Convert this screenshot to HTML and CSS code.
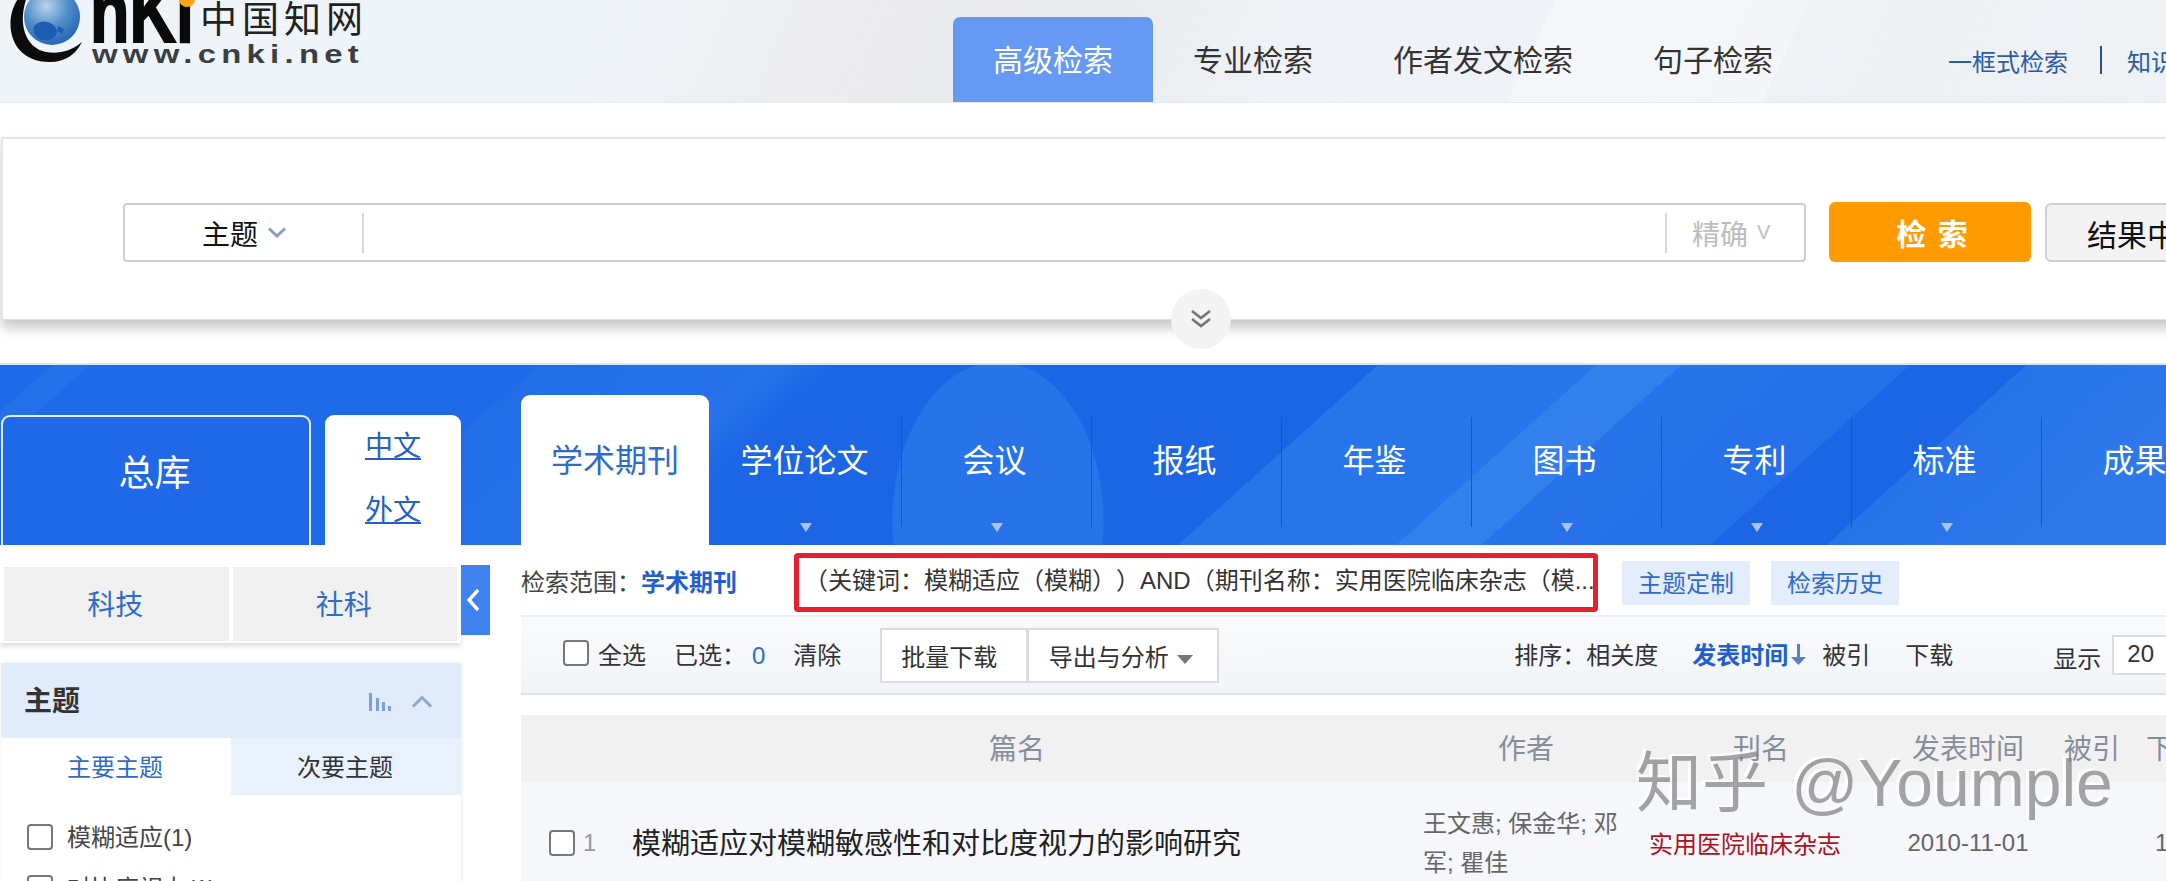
FILE: index.html
```html
<!DOCTYPE html>
<html lang="zh-CN">
<head>
<meta charset="utf-8">
<title>中国知网 高级检索</title>
<link rel="stylesheet" href="styles.css">
</head>
<body>
<header class="topbar">
  <div class="logo">
    <svg class="logo-svg" width="370" height="70" viewBox="0 0 370 70">
      <defs>
        <radialGradient id="globe" cx="0.4" cy="0.3" r="0.8">
          <stop offset="0" stop-color="#b9d5e6"/>
          <stop offset="0.5" stop-color="#4f8ccb"/>
          <stop offset="1" stop-color="#1a5cb0"/>
        </radialGradient>
      </defs>
      <path d="M22 -6 C2 14 6 62 50 62 C66 62 76 54 82 42 C70 52 58 54 46 52 C26 48 16 24 28 -6 Z" fill="#0b0b0b"/>
      <circle cx="52" cy="17" r="28" fill="url(#globe)"/>
      <path d="M34 26 C42 18 52 22 56 28 C60 36 50 42 42 40 C36 38 32 32 34 26 Z M58 26 l6 3 -2 5 -5 -3 Z" fill="#1f5db4"/>
      <text class="logo-nki" x="90" y="42" textLength="104" lengthAdjust="spacingAndGlyphs">nKi</text>
      <circle cx="187" cy="-1" r="8" fill="#ffa514"/>
      <text class="logo-cn" x="200" y="33" textLength="163">中国知网</text>
      <text class="logo-url" x="92" y="63" textLength="272" lengthAdjust="spacingAndGlyphs">www.cnki.net</text>
    </svg>
  </div>
  <nav class="modes">
    <a class="mode mode-on">高级检索</a>
    <a class="mode">专业检索</a>
    <a class="mode">作者发文检索</a>
    <a class="mode">句子检索</a>
  </nav>
  <div class="quick">
    <a class="quick-link">一框式检索</a>
    <span class="quick-sep"></span>
    <a class="quick-link">知识元检索</a>
  </div>
</header>

<section class="search-wrap">
  <div class="search-panel">
    <div class="search-box">
      <div class="field-select">
        <span>主题</span>
        <svg class="field-chev" width="20" height="11" viewBox="0 0 20 11"><path d="M2 1.500 L10 9 L18 1.500" fill="none" stroke="#8b9cc9" stroke-width="3"/></svg>
      </div>
      <div class="search-input"></div>
      <div class="precise"><span>精确</span><span class="precise-v">V</span></div>
    </div>
    <button class="btn-search">检 索</button>
    <button class="btn-within">结果中检索</button>
    <div class="expand">
      <svg width="22" height="18" viewBox="0 0 22 18"><path d="M2 1 L11 8 L20 1 M2 9 L11 16 L20 9" fill="none" stroke="#777" stroke-width="2.600"/></svg>
    </div>
  </div>
</section>

<section class="band">
  <a class="lib-all">总库</a>
  <div class="lib-lang"><a>中文</a><a>外文</a></div>
  <a class="db-on">学术期刊</a>
  <a class="db db-first db-more">学位论文</a>
  <a class="db db-more">会议</a>
  <a class="db">报纸</a>
  <a class="db">年鉴</a>
  <a class="db db-more">图书</a>
  <a class="db db-more">专利</a>
  <a class="db db-more">标准</a>
  <a class="db">成果</a>
</section>

<div class="content">
  <aside class="sidebar">
    <div class="cat-tabs">
      <a class="cat">科技</a>
      <a class="cat">社科</a>
    </div>
    <div class="facet">
      <div class="facet-head">
        <strong>主题</strong>
        <svg class="facet-chart" width="23" height="18" viewBox="0 0 23 18"><path d="M1 0h3v18H1z M8 5h3v13H8z M14 9h3v9h-3z M20 13h3v5h-3z" fill="#7d9fd6"/></svg>
        <svg class="facet-chev" width="22" height="13" viewBox="0 0 22 13"><path d="M2 11.500 L11 2.500 L20 11.500" fill="none" stroke="#8aa6d4" stroke-width="3"/></svg>
      </div>
      <div class="facet-tabs">
        <a class="facet-tab facet-tab-on">主要主题</a>
        <a class="facet-tab">次要主题</a>
      </div>
      <ul class="facet-list">
        <li><span class="check"></span><span class="facet-text">模糊适应(1)</span></li>
        <li><span class="check"></span><span class="facet-text">对比度视力(1)</span></li>
      </ul>
    </div>
  </aside>
  <button class="collapse" aria-label="收起">
    <svg width="15" height="24" viewBox="0 0 15 24"><path d="M12 2 L3 12 L12 22" fill="none" stroke="#fff" stroke-width="3.400"/></svg>
  </button>
  <main class="main">
    <div class="scope">
      <span class="scope-label">检索范围：</span><b class="scope-label scope-db">学术期刊</b>
      <div class="query">（关键词：模糊适应（模糊））AND（期刊名称：实用医院临床杂志（模...</div>
      <a class="chip chip-first">主题定制</a>
      <a class="chip">检索历史</a>
    </div>
    <div class="toolbar">
      <span class="check check-all"></span>
      <span>全选</span>
      <span class="selected">已选：<em>0</em></span>
      <span class="clear">清除</span>
      <button class="tool-btn tool-batch">批量下载</button>
      <button class="tool-btn tool-export">导出与分析<i class="caret"></i></button>
      <span class="sort-label">排序：相关度</span>
      <b class="sort-on">发表时间</b>
      <svg class="sort-arrow" width="15" height="24" viewBox="0 0 15 24"><path d="M6 2h3v13h6L7.500 23 0 15h6z" fill="#5b7fc0"/></svg>
      <span class="sort-cite">被引</span>
      <span class="sort-dl">下载</span>
      <span class="show">显示</span>
      <span class="page-size">20</span>
    </div>
    <div class="grid grid-head">
      <span></span>
      <span class="c">篇名</span>
      <span class="c">作者</span>
      <span class="c">刊名</span>
      <span class="c">发表时间</span>
      <span class="c">被引</span>
      <span class="dl-head">下载</span>
    </div>
    <div class="grid grid-row">
      <span class="row-no"><span class="check"></span><span class="no">1</span></span>
      <a class="row-title">模糊适应对模糊敏感性和对比度视力的影响研究</a>
      <span class="row-authors">王文惠; 保金华; 邓军; 瞿佳</span>
      <a class="row-journal">实用医院临床杂志</a>
      <span class="row-date">2010-11-01</span>
      <span></span>
      <span class="row-dl">1</span>
    </div>
  </main>
</div>
<div class="watermark">知乎 @Youmple</div>
</body>
</html>
```

FILE: styles.css
```css
* { box-sizing: border-box; }
html, body { margin: 0; padding: 0; }
body {
  position: relative;
  width: 2166px;
  height: 881px;
  overflow: hidden;
  background: #fff;
  color: #333;
  font-family: "Liberation Sans", "Noto Sans CJK SC", sans-serif;
  font-size: 24px;
  text-spacing-trim: space-all;
}
a { color: inherit; text-decoration: none; }
button { font-family: inherit; padding: 0; cursor: pointer; }

/* top bar */
.topbar {
  display: flex;
  height: 103px;
  border-bottom: 1px solid #e6e8ea;
  background:
    linear-gradient(115deg, transparent 1410px, rgba(255,255,255,.3) 1410px, rgba(255,255,255,.3) 1640px, transparent 1640px),
    linear-gradient(115deg, #eff4f9 0, #eff4f9 560px, #ececee 760px, #e9eaec 1000px, #eef2f6 1180px, #eff3f7 1500px, #edf0f3 1750px, #eef2f6 2100px);
}
.logo { flex: none; width: 953px; height: 102px; overflow: hidden; }
.logo-svg { display: block; overflow: hidden; }
.logo-nki { font: 700 88px "Liberation Sans", sans-serif; fill: #0a0a0a; stroke: #0a0a0a; stroke-width: 2px; }
.logo-cn { font: 400 37px "Noto Sans CJK SC", sans-serif; fill: #222; }
.logo-url { font: 700 25px "Liberation Sans", sans-serif; letter-spacing: 4px; fill: #3a3f44; }
.modes { display: flex; flex: none; }
.mode {
  display: flex;
  align-items: center;
  height: 85px;
  margin-top: 17px;
  padding: 0 40px 4px;
  font-size: 30px;
  color: #333;
  border-radius: 7px 7px 0 0;
}
.mode-on { background: #6699f3; color: #fff; }
.quick {
  display: flex;
  flex: none;
  align-items: center;
  height: 102px;
  margin-left: 135px;
  padding-top: 18px;
  white-space: nowrap;
  color: #2a5aa8;
}
.quick-sep { width: 2px; height: 28px; margin: 0 25px 0 32px; background: #2d4f80; }

/* search */
.search-wrap { padding: 34px 0 0 1px; height: 260px; overflow: hidden; }
.search-panel {
  position: relative;
  display: flex;
  align-items: flex-start;
  width: 2240px;
  height: 183px;
  padding: 64px 0 0 120px;
  border: 2px solid #e6e6e6;
  border-bottom: 1px solid #dedede;
  border-radius: 2px;
  box-shadow: 0 8px 12px rgba(0,0,0,.22);
  background: #fff;
}
.search-box {
  display: flex;
  flex: none;
  align-items: center;
  width: 1683px;
  height: 59px;
  border: 2px solid #cfcfcf;
  border-radius: 4px;
}
.field-select {
  display: flex;
  flex: none;
  align-items: center;
  width: 239px;
  height: 40px;
  padding-left: 77px;
  border-right: 2px solid #d8d8d8;
  font-size: 28px;
  color: #111;
}
.field-chev { margin-left: 9px; }
.search-input { flex: 1; }
.precise {
  display: flex;
  flex: none;
  align-items: center;
  width: 139px;
  height: 40px;
  padding-left: 25px;
  border-left: 2px solid #d8d8d8;
  font-size: 28px;
  color: #bdbdbd;
}
.precise-v { margin-left: 9px; font-size: 20px; }
.btn-search {
  flex: none;
  width: 202px;
  height: 60px;
  margin: -1px 0 0 23px;
  border: 0;
  border-radius: 6px;
  background: #ff9b00;
  color: #fff;
  font-size: 30px;
  font-weight: 700;
  word-spacing: 3px;
  text-indent: 4px;
}
.btn-within {
  flex: none;
  width: 240px;
  height: 59px;
  margin-left: 14px;
  padding-left: 40px;
  border: 2px solid #cfcfcf;
  border-radius: 6px;
  background: #f3f3f3;
  color: #111;
  font-size: 30px;
  text-align: left;
  white-space: nowrap;
}
.expand {
  position: absolute;
  left: 1168px;
  top: 150px;
  display: flex;
  align-items: center;
  justify-content: center;
  width: 60px;
  height: 60px;
  border-radius: 50%;
  background: #f3f3f3;
}

/* blue band */
.band {
  display: flex;
  align-items: flex-end;
  height: 182px;
  padding-left: 1px;
  overflow: hidden;
  border-top: 2px solid #d6e6f5;
  background:
    radial-gradient(ellipse 106px 160px at 998px 156px, #2873ea 99%, transparent 100%),
    linear-gradient(138deg,
      #1f6ae8 0, #1f6ae8 35px, #2670e9 35px, #2670e9 60px, #1f6ae8 60px,
      #1f6ae8 360px, #236de9 360px, #2771ea 520px, #1c66e6 560px,
      #1c66e6 922px, #2874ea 922px, #2976ea 1068px, #347fee 1068px, #347fee 1125px,
      #2873ea 1125px, #2570e9 1278px, #1c66e6 1278px, #1c66e6 1356px, #2873ea 1356px, #2f78ea 1500px);
}
.lib-all {
  display: flex;
  flex: none;
  align-items: center;
  justify-content: center;
  width: 310px;
  height: 130px;
  padding: 0 3px 22px 0;
  border: 2px solid #e6f0fd;
  border-bottom: 0;
  border-radius: 9px 9px 0 0;
  font-size: 36px;
  color: #fff;
  background: #1f69e8;
}
.lib-lang {
  display: flex;
  flex: none;
  flex-direction: column;
  align-items: center;
  width: 136px;
  height: 130px;
  margin-left: 14px;
  border-radius: 9px 9px 0 0;
  background: #fff;
  font-size: 28px;
  line-height: 64px;
  color: #2361c6;
}
.lib-lang a { text-decoration: underline; }
.db-on {
  flex: none;
  width: 188px;
  height: 150px;
  margin-left: 60px;
  border-radius: 9px 9px 0 0;
  background: #fff;
  color: #2f6cc9;
  font-size: 32px;
  line-height: 132px;
  text-align: center;
}
.db {
  position: relative;
  flex: none;
  width: 190px;
  height: 128px;
  padding-right: 5px;
  color: #fff;
  font-size: 32px;
  line-height: 88px;
  text-align: center;
}
.db-first { width: 193px; padding-right: 2px; }
.db::after {
  content: "";
  position: absolute;
  top: 0;
  right: 0;
  bottom: 18px;
  width: 1px;
  background: #1555cf;
}
.db-more::before {
  content: "";
  position: absolute;
  top: 106px;
  left: 50%;
  margin-left: -6px;
  border: 6px solid transparent;
  border-top: 9px solid #a9c4f3;
  border-bottom: 0;
}

/* content */
.content { display: flex; align-items: flex-start; }
.sidebar { flex: none; width: 461px; height: 336px; }
.cat-tabs {
  display: flex;
  gap: 4px;
  height: 78px;
  margin-top: 20px;
  padding: 2px 4px;
  background: #fff;
  box-shadow: 0 3px 5px rgba(0,0,0,.14);
}
.cat {
  display: flex;
  flex: 1;
  align-items: center;
  justify-content: center;
  padding: 0 2px 3px 0;
  background: #f0f0f0;
  color: #2f6cc9;
  font-size: 28px;
}
.facet {
  margin: 20px 0 0 1px;
  height: 240px;
  box-shadow: 1px 0 4px rgba(0,0,0,.08);
}
.facet-head {
  display: flex;
  align-items: center;
  height: 75px;
  padding-left: 23px;
  background: #e0ebfb;
}
.facet-head strong { padding-bottom: 3px; font-size: 28px; color: #333; }
.facet-chart { margin-left: 288px; margin-top: 2px; }
.facet-chev { margin-left: 20px; margin-top: 2px; }
.facet-tabs { display: flex; height: 57px; }
.facet-tab {
  display: flex;
  flex: 1;
  align-items: center;
  justify-content: center;
  padding: 0 2px 3px 0;
  background: #e9f1fc;
  color: #333;
}
.facet-tab-on { background: #fff; color: #2f6cc9; }
.facet-list { margin: 0; padding: 29px 0 0 26px; list-style: none; color: #444; }
.facet-list li { display: flex; align-items: center; height: 26px; margin-bottom: 25px; }
.facet-list .check { margin-right: 14px; }
.facet-text { padding-bottom: 3px; }
.check {
  display: inline-block;
  flex: none;
  width: 26px;
  height: 26px;
  border: 2px solid #777;
  border-radius: 4px;
  background: #fff;
}
.collapse {
  flex: none;
  display: flex;
  align-items: center;
  justify-content: flex-start;
  width: 29px;
  height: 70px;
  margin-top: 20px;
  padding-left: 5px;
  border: 0;
  background: #3d82ee;
}
.main { flex: none; width: 1645px; margin-left: 31px; overflow: hidden; }
.scope { display: flex; align-items: center; height: 59px; margin-top: 8px; white-space: nowrap; color: #444; }
.scope-label { padding-bottom: 4px; }
.scope-db { color: #1f5fd0; }
.query {
  flex: none;
  width: 804px;
  height: 59px;
  margin-left: 57px;
  padding-left: 5px;
  border: 5px solid #e8202e;
  border-radius: 4px;
  line-height: 45px;
  color: #333;
}
.chip {
  display: flex;
  flex: none;
  align-items: center;
  justify-content: center;
  width: 128px;
  height: 44px;
  margin-left: 21px;
  padding-bottom: 3px;
  background: #e3edfb;
  color: #2f6cc9;
}
.chip-first { margin-left: 24px; }
.toolbar {
  display: flex;
  align-items: center;
  height: 80px;
  margin-top: 3px;
  padding-left: 42px;
  white-space: nowrap;
  border-top: 2px solid #eceef0;
  border-bottom: 2px solid #dfe3e8;
  background: linear-gradient(#f9fafb, #f1f4f8);
}
.toolbar > * { flex: none; }
.toolbar > span { position: relative; top: -2px; }
.check-all { margin-right: 9px; }
.selected { margin-left: 28px; }
.selected em { margin-left: 6px; font-style: normal; color: #2f6cc9; }
.clear { margin-left: 28px; }
.tool-btn {
  height: 55px;
  border: 2px solid #dcdcdc;
  background: #fff;
  color: #333;
  font-size: 24px;
}
.tool-batch { width: 148px; margin-left: 39px; padding-right: 10px; }
.tool-export { width: 192px; margin-left: -1px; padding-right: 5px; }
.caret {
  display: inline-block;
  margin-left: 8px;
  vertical-align: 2px;
  border: 8px solid transparent;
  border-top: 9px solid #777;
  border-bottom: 0;
}
.sort-label { margin-left: 295px; }
.sort-on { margin-left: 34px; color: #1f5fd0; position: relative; top: -2px; }
.sort-arrow { margin-left: 3px; position: relative; top: -1px; }
.sort-cite { margin-left: 16px; }
.sort-dl { margin-left: 35px; }
.toolbar > .show { margin-left: 100px; top: 2px; }
.toolbar > .page-size {
  width: 80px;
  height: 40px;
  margin-left: 11px;
  padding-left: 13px;
  top: 0;
  border: 2px solid #dcdcdc;
  background: #fff;
  line-height: 33px;
}
.grid { display: grid; grid-template-columns: 90px 812px 206px 264px 150px 98px 100px; align-items: center; }
.grid-head {
  height: 67px;
  margin-top: 20px;
  padding-bottom: 3px;
  background: #f1f1f2;
  color: #888e99;
  font-size: 28px;
  white-space: nowrap;
}
.c { text-align: center; }
.dl-head { padding-left: 5px; }
.grid-row { height: 124px; padding-bottom: 3px; background: #f5f7fa; }
.row-no { display: flex; align-items: center; padding-left: 28px; }
.no { margin-left: 8px; color: #999; }
.row-title { padding: 0 0 3px 21px; color: #222; font-size: 29px; white-space: nowrap; }
.row-authors { width: 200px; color: #666; line-height: 39px; }
.row-journal { padding-left: 20px; color: #b01020; white-space: nowrap; }
.row-date { color: #666; text-align: center; }
.row-dl { padding-left: 14px; color: #666; }

/* watermark overlay */
.watermark {
  position: absolute;
  left: 1636px;
  top: 738px;
  font-size: 66px;
  line-height: 90px;
  word-spacing: 5px;
  white-space: nowrap;
  color: rgba(108,108,112,.62);
  text-shadow: -3px -2px 0 rgba(255,255,255,.85);
  pointer-events: none;
}
```
